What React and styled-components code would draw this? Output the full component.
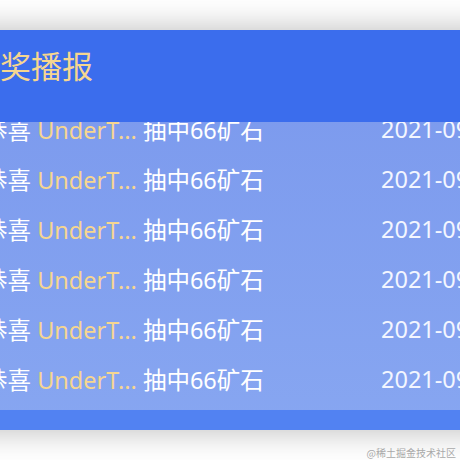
import React from "react";
import styled, { createGlobalStyle } from "styled-components";

const Global = createGlobalStyle`
  html, body { margin: 0; padding: 0; background: #fff; }
  body { font-family: "Noto Sans", "Noto Sans CJK SC", sans-serif; overflow: hidden; }
`;

const Page = styled.div`
  width: 460px;
  height: 460px;
  overflow: hidden;
  padding-top: 30px;
  box-sizing: border-box;
  display: flex;
  flex-direction: column;
`;

const Card = styled.div`
  width: 540px;
  height: 400px;
  margin-left: -40px;
  display: flex;
  flex-direction: column;
  background: linear-gradient(180deg, #7a98ed 0%, #87a6f1 100%);
  box-shadow: 0 0 32px rgba(0, 0, 0, 0.28);
  flex-shrink: 0;
`;

const Header = styled.div`
  position: relative;
  z-index: 1;
  height: 92px;
  flex-shrink: 0;
  background: #3b6ded;
  padding: 18px 0 0 9px;
  box-sizing: border-box;
`;

const Title = styled.h1`
  margin: 0;
  font-size: 31px;
  line-height: 36px;
  font-weight: 400;
  color: #f6d690;
  letter-spacing: 0;
`;

const List = styled.ul`
  list-style: none;
  margin: -18px 0 0;
  padding: 0;
  height: 306px;
  overflow: hidden;
  flex-shrink: 0;
`;

const Row = styled.li`
  height: 50px;
  display: grid;
  grid-template-columns: 397px 1fr;
  align-items: center;
  padding-left: 24px;
  font-size: 23.5px;
  color: #fff;
  white-space: nowrap;
`;

const Name = styled.span`
  color: #f6d690;
`;

const DateText = styled.span`
  color: #f3f6ff;
`;

const Strip = styled.div`
  flex: 1;
  background: #5282f2;
`;

const Footer = styled.div`
  text-align: right;
  padding: 17px 4px 0 0;
  font-size: 10px;
  line-height: 12px;
  color: #a9a9a9;
  font-family: "Noto Sans CJK SC", sans-serif;
`;

const rows = Array.from({ length: 6 }, (_, i) => ({
  id: i,
  name: "UnderT...",
  prize: "抽中66矿石",
  date: "2021-09-13 12:00",
}));

export default function App() {
  return (
    <>
      <Global />
      <Page>
        <Card>
          <Header>
            <Title>中奖播报</Title>
          </Header>
          <List>
            {rows.map((r) => (
              <Row key={r.id}>
                <span>
                  恭喜 <Name>{r.name}</Name> {r.prize}
                </span>
                <DateText>{r.date}</DateText>
              </Row>
            ))}
          </List>
          <Strip />
        </Card>
        <Footer>@稀土掘金技术社区</Footer>
      </Page>
    </>
  );
}
